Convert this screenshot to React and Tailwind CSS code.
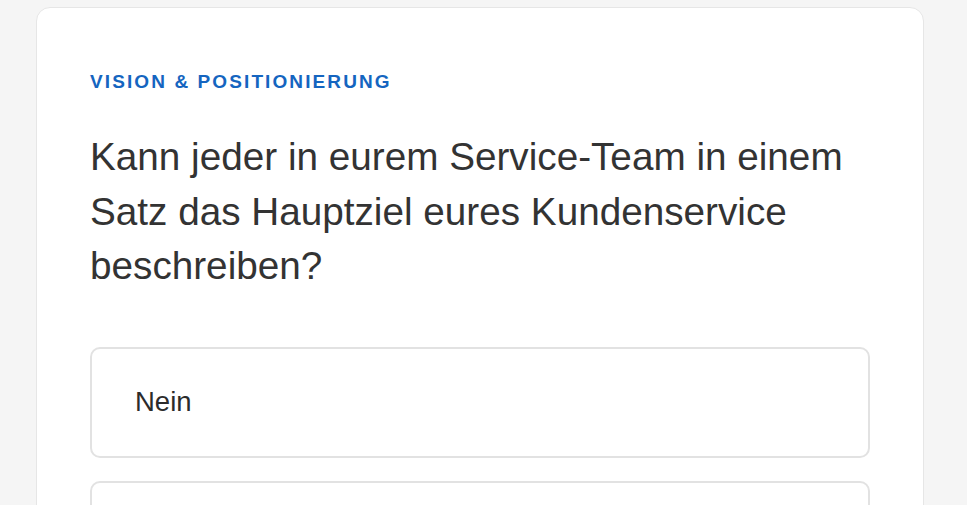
const options = ["Nein", "Teilweise", "Ja"];

export default function App() {
  return (
    <div
      className="h-screen bg-[#f5f5f5] pt-[7px] overflow-hidden"
      style={{ fontFamily: '"Liberation Sans", Arial, sans-serif' }}
    >
      <div className="ml-[36px] w-[888px] bg-white border border-[#e6e6e6] rounded-[14px] px-[53px] pt-[60px] pb-10">
        {/* Kategorie */}
        <div className="text-[19px] leading-[28px] font-bold tracking-[2.1px] text-[#1565c0]">
          VISION &amp; POSITIONIERUNG
        </div>

        {/* Frage */}
        <h2 className="mt-[34px] text-[38.7px] leading-[54.5px] text-[#333333]">
          Kann jeder in eurem Service-Team in einem Satz das Hauptziel eures
          Kundenservice beschreiben?
        </h2>

        {/* Antworten */}
        <div className="mt-[53px] flex flex-col gap-[23px]">
          {options.map((label) => (
            <button
              key={label}
              className="h-[111px] w-full text-left flex items-center pl-[43px] border-2 border-[#e2e2e2] rounded-[10px] bg-white text-[27.5px] text-[#2b2b2b]"
            >
              {label}
            </button>
          ))}
        </div>
      </div>
    </div>
  );
}
